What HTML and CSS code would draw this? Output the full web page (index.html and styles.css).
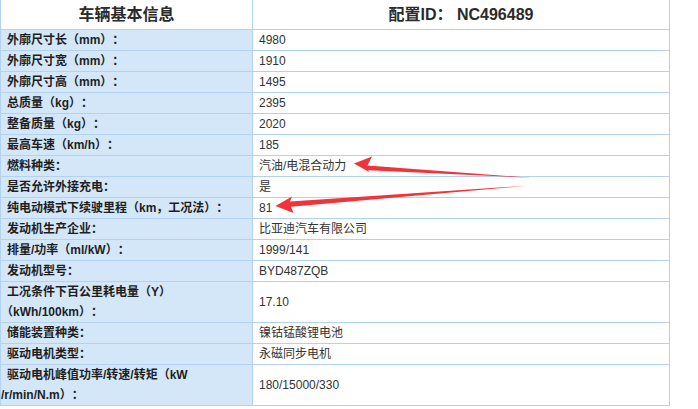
FILE: index.html
```html
<!DOCTYPE html>
<html lang="zh-CN">
<head>
<meta charset="utf-8">
<title>车辆基本信息</title>
<link rel="stylesheet" href="styles.css">
</head>
<body>
<div class="page">
  <table class="spec">
    <colgroup><col class="col-label"><col class="col-value"></colgroup>
    <thead>
      <tr><th class="head">车辆基本信息</th><th class="head">配置ID： NC496489</th></tr>
    </thead>
    <tbody>
      <tr><td class="label">外廓尺寸长（mm）：</td><td class="value">4980</td></tr>
      <tr><td class="label">外廓尺寸宽（mm）：</td><td class="value">1910</td></tr>
      <tr><td class="label">外廓尺寸高（mm）：</td><td class="value">1495</td></tr>
      <tr><td class="label">总质量（kg）：</td><td class="value">2395</td></tr>
      <tr><td class="label">整备质量（kg）：</td><td class="value">2020</td></tr>
      <tr><td class="label">最高车速（km/h）：</td><td class="value">185</td></tr>
      <tr><td class="label">燃料种类：</td><td class="value">汽油/电混合动力</td></tr>
      <tr><td class="label">是否允许外接充电：</td><td class="value">是</td></tr>
      <tr><td class="label">纯电动模式下续驶里程（km，工况法）：</td><td class="value">81</td></tr>
      <tr><td class="label">发动机生产企业：</td><td class="value">比亚迪汽车有限公司</td></tr>
      <tr><td class="label">排量/功率（ml/kW）：</td><td class="value">1999/141</td></tr>
      <tr><td class="label">发动机型号：</td><td class="value">BYD487ZQB</td></tr>
      <tr><td class="label">工况条件下百公里耗电量（Y）<br>（kWh/100km）：</td><td class="value">17.10</td></tr>
      <tr><td class="label">储能装置种类：</td><td class="value">镍钴锰酸锂电池</td></tr>
      <tr><td class="label">驱动电机类型：</td><td class="value">永磁同步电机</td></tr>
      <tr><td class="label">驱动电机峰值功率/转速/转矩（kW<br>/r/min/N.m）：</td><td class="value">180/15000/330</td></tr>
    </tbody>
  </table>
  <svg class="arrows" width="698" height="409" viewBox="0 0 698 409" aria-hidden="true">
    <polygon points="354,163.5 372,156.5 367.5,165.5 531,177.8 368,170.2 370,172.5" fill="#f2333a"/>
    <polygon points="275.5,206 292,196.5 290,201.5 526,185.8 291,206.8 293.5,213" fill="#f2333a"/>
  </svg>
</div>
</body>
</html>
```
FILE: styles.css
```css
html, body {
  margin: 0;
  padding: 0;
  background: #ffffff;
}

.page {
  position: relative;
  width: 698px;
  height: 409px;
  overflow: hidden;
}

.spec {
  border-collapse: collapse;
  width: 669px;
  table-layout: fixed;
  font-family: "Liberation Sans", "Noto Sans CJK SC", sans-serif;
  text-spacing-trim: space-all;
}

.col-label { width: 252px; }
.col-value { width: 417px; }

.spec th,
.spec td {
  border: 1px solid #b3d2f1;
  padding: 0;
  line-height: 20px;
  vertical-align: middle;
}

.spec .head {
  border-top: none;
  height: 29px;
  font-size: 16px;
  font-weight: bold;
  color: #2b2b2b;
  text-align: center;
  background: #ffffff;
}

.spec .label {
  background: #d4e7f9;
  font-size: 12px;
  font-weight: bold;
  color: #1e1e1e;
  text-indent: 6px;
  white-space: nowrap;
}

.spec .value {
  background: #ffffff;
  font-size: 12px;
  color: #333333;
  padding-left: 6px;
}

.arrows {
  position: absolute;
  left: 0;
  top: 0;
  pointer-events: none;
}
```
